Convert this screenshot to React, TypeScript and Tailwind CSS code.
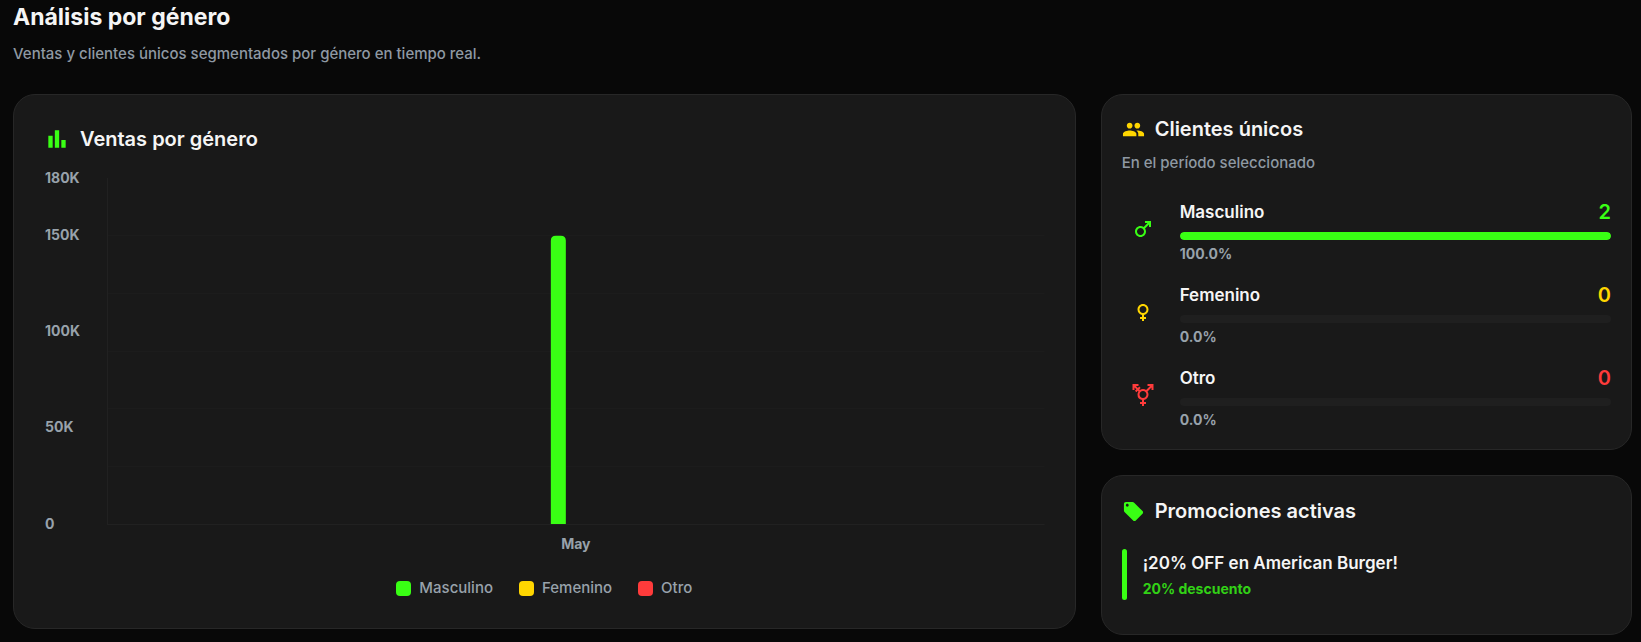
import React from 'react';
import { MdBarChart, MdFemale, MdLocalOffer, MdMale, MdPeople, MdTransgender } from 'react-icons/md';
import type { IconType } from 'react-icons';

interface Genero {
  label: string;
  color: string;
  Icon: IconType;
  clientes: number;
  ventas: number;
}

const generos: Genero[] = [
  { label: 'Masculino', color: '#39ff14', Icon: MdMale, clientes: 2, ventas: 150000 },
  { label: 'Femenino', color: '#ffd600', Icon: MdFemale, clientes: 0, ventas: 0 },
  { label: 'Otro', color: '#ff3b3b', Icon: MdTransgender, clientes: 0, ventas: 0 },
];

const ticks = [180, 150, 100, 50, 0];

const PLOT_TOP = 14;
const PLOT_HEIGHT = 346;
const PLOT_LEFT = 63;
const BAR_WIDTH = 15;
const BAR_STEP = 17;
const MAX = 180000;

const yFor = (value: number) => PLOT_TOP + PLOT_HEIGHT * (1 - value / MAX);

const VentasChart: React.FC = () => (
  <svg className="block h-[392px] w-full" role="img" aria-label="Ventas por género">
    {ticks.map(tick => (
      <text
        key={tick}
        x={1}
        y={Math.floor(yFor(tick * 1000)) + 5}
        className="fill-[#98a2ab] text-[14px] font-bold"
      >
        {tick === 0 ? '0' : `${tick}K`}
      </text>
    ))}

    <svg x={PLOT_LEFT} className="overflow-visible" width="100%">
      {/* líneas de la grilla */}
      {[1, 2, 3, 4, 5].map(i => (
        <rect
          key={i}
          x={0}
          y={Math.floor(PLOT_TOP + (PLOT_HEIGHT / 6) * i)}
          height={1}
          className="w-[calc(100%-63px)] fill-[#1c1c1c]"
        />
      ))}
      <rect x={0} y={PLOT_TOP} width={1} height={PLOT_HEIGHT} className="fill-[#212121]" />
      <rect x={0} y={PLOT_TOP + PLOT_HEIGHT} height={1} className="w-[calc(100%-63px)] fill-[#212121]" />
    </svg>

    {/* grupo de barras centrado en el área del gráfico */}
    <svg x="50%" className="overflow-visible">
      <g transform={`translate(${PLOT_LEFT / 2 - 25} 0)`}>
        {generos.filter(g => g.ventas > 0).map((g, i) => {
          const top = yFor(g.ventas);
          const bottom = PLOT_TOP + PLOT_HEIGHT;
          const x = i * BAR_STEP;
          return (
            <path
              key={g.label}
              fill={g.color}
              d={`M${x} ${bottom}V${top + 5}q0-5 5-5h${BAR_WIDTH - 10}q5 0 5 5V${bottom}z`}
            />
          );
        })}
        <text x={25} y={385} textAnchor="middle" className="fill-[#98a2ab] text-[14px] font-bold">
          May
        </text>
      </g>
    </svg>
  </svg>
);

const GeneroRow: React.FC<{ genero: Genero; total: number }> = ({ genero, total }) => {
  const { label, color, Icon, clientes } = genero;
  const pct = total > 0 ? (clientes / total) * 100 : 0;

  return (
    <li className="flex items-center gap-4">
      <div className="flex w-[42px] shrink-0 justify-center pb-1">
        <Icon size={24} color={color} />
      </div>
      <div className="min-w-0 flex-1">
        <div className="flex items-center justify-between leading-7">
          <span className="text-[17px] font-semibold">{label}</span>
          <span className="text-xl font-semibold" style={{ color }}>{clientes}</span>
        </div>
        <div className="mt-[6px] h-2 overflow-hidden rounded-full bg-[#1f1f1f]">
          <div className="h-full rounded-full" style={{ width: `${pct}%`, backgroundColor: color }} />
        </div>
        <div className="mt-1 text-[14px] leading-5 font-bold text-[#98a2ab]">{pct.toFixed(1)}%</div>
      </div>
    </li>
  );
};

export default function App() {
  const total = generos.reduce((sum, g) => sum + g.clientes, 0);

  return (
    <div className="min-h-screen bg-[#080808] pr-[9px] pb-[7px] pl-[13px] font-['Inter','Noto_Sans',sans-serif] text-[#f5f5f5]">
      <header className="pb-7">
        <h1 className="text-[23px] leading-[34px] font-bold">Análisis por género</h1>
        <p className="mt-2 text-[15px] leading-6 font-medium text-[#8f99a3]">
          Ventas y clientes únicos segmentados por género en tiempo real.
        </p>
      </header>

      <div className="grid grid-cols-[2fr_1fr] items-start gap-[25px]">
        <section className="rounded-[22px] border border-[#272727] bg-[#191919] px-[30px] pt-7 pb-7">
          <h2 className="flex items-center gap-[10px] text-xl leading-8 font-semibold">
            <MdBarChart size={26} color="#39ff14" />
            Ventas por género
          </h2>
          <div className="mt-[9px]">
            <VentasChart />
          </div>
          <ul className="mt-5 flex justify-center gap-[26px]">
            {generos.map(g => (
              <li key={g.label} className="flex items-center gap-2 text-[15px] leading-6 font-medium text-[#98a2ab]">
                <span className="size-[15px] rounded-[4px]" style={{ backgroundColor: g.color }} />
                {g.label}
              </li>
            ))}
          </ul>
        </section>

        <div className="flex flex-col gap-[25px]">
          <section className="rounded-[22px] border border-[#272727] bg-[#191919] px-5 pt-[18px] pb-[19px]">
            <h2 className="flex items-center gap-[10px] text-xl leading-8 font-semibold">
              <MdPeople size={23} color="#ffd600" />
              Clientes únicos
            </h2>
            <p className="mt-[6px] text-[15px] leading-6 font-medium text-[#8f99a3]">En el período seleccionado</p>
            <ul className="mt-[23px] flex flex-col gap-[17px]">
              {generos.map(g => (
                <GeneroRow key={g.label} genero={g} total={total} />
              ))}
            </ul>
          </section>

          <section className="rounded-[22px] border border-[#272727] bg-[#191919] px-5 pt-[19px] pb-[34px]">
            <h2 className="flex items-center gap-[10px] text-xl leading-8 font-semibold">
              <MdLocalOffer size={23} color="#39ff14" />
              Promociones activas
            </h2>
            <div className="mt-[22px] flex gap-4">
              <div className="w-[5px] rounded-full bg-[#39ff14]" />
              <div>
                <div className="text-[17px] leading-[29px] font-semibold">¡20% OFF en American Burger!</div>
                <div className="text-[14px] leading-[22px] font-bold text-[#32d116]">20% descuento</div>
              </div>
            </div>
          </section>
        </div>
      </div>
    </div>
  );
}
